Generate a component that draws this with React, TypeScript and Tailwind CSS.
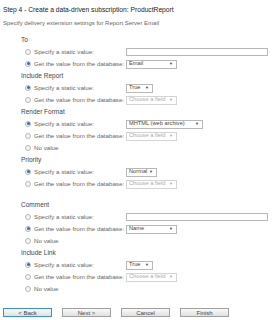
import React from 'react';

type Opt = {
  label: string;
  checked?: boolean;
  control?: 'input' | 'select' | 'disabled';
  value?: string;
  width?: string;
};

type Section = { title: string; options: Opt[]; gapBefore?: boolean };

const sections: Section[] = [
  {
    title: 'To',
    options: [
      { label: 'Specify a static value:', control: 'input' },
      { label: 'Get the value from the database:', checked: true, control: 'select', value: 'Email', width: 'w-[51px]' },
    ],
  },
  {
    title: 'Include Report',
    options: [
      { label: 'Specify a static value:', checked: true, control: 'select', value: 'True', width: 'w-[27px]' },
      { label: 'Get the value from the database:', control: 'disabled' },
    ],
  },
  {
    title: 'Render Format',
    options: [
      { label: 'Specify a static value:', checked: true, control: 'select', value: 'MHTML (web archive)', width: 'w-[77px]' },
      { label: 'Get the value from the database:', control: 'disabled' },
      { label: 'No value' },
    ],
  },
  {
    title: 'Priority',
    options: [
      { label: 'Specify a static value:', checked: true, control: 'select', value: 'Normal', width: 'w-[31px]' },
      { label: 'Get the value from the database:', control: 'disabled' },
    ],
  },
  {
    title: 'Comment',
    gapBefore: true,
    options: [
      { label: 'Specify a static value:', control: 'input' },
      { label: 'Get the value from the database:', checked: true, control: 'select', value: 'Name', width: 'w-[51px]' },
      { label: 'No value' },
    ],
  },
  {
    title: 'Include Link',
    options: [
      { label: 'Specify a static value:', checked: true, control: 'select', value: 'True', width: 'w-[27px]' },
      { label: 'Get the value from the database:', control: 'disabled' },
      { label: 'No value' },
    ],
  },
];

function Radio({ checked }: { checked?: boolean }) {
  return (
    <span className="flex h-[6px] w-[6px] shrink-0 items-center justify-center rounded-full border border-[#b8b8b8] bg-[#f4f4f4]">
      {checked && <span className="h-[3px] w-[3px] rounded-full bg-[#2c6bb8]" />}
    </span>
  );
}

function Select({ value, width, disabled }: { value: string; width: string; disabled?: boolean }) {
  return (
    <div
      className={`flex h-[9px] ${width} items-center justify-between overflow-hidden border bg-white pl-[2px] pr-[3px] text-[5.7px] ${
        disabled ? 'border-[#d4d4d4] text-[#aaa]' : 'border-[#b8b8b8] text-[#444]'
      }`}
    >
      <span className="whitespace-nowrap">{value}</span>
      <span className="text-[4px]">▼</span>
    </div>
  );
}

function OptionRow({ opt }: { opt: Opt }) {
  return (
    <div className="flex h-[12px] items-center">
      <div className="flex w-[126px] shrink-0 items-center gap-[3px] pl-[25px]">
        <Radio checked={opt.checked} />
        <span className="whitespace-nowrap text-[#666]">{opt.label}</span>
      </div>
      {opt.control === 'input' && <div className="h-[8px] w-[142px] border border-[#b8b8b8] bg-white" />}
      {opt.control === 'select' && <Select value={opt.value!} width={opt.width!} />}
      {opt.control === 'disabled' && <Select value="Choose a field" width="w-[51px]" disabled />}
    </div>
  );
}

function Button({ label, focused }: { label: string; focused?: boolean }) {
  return (
    <button
      className={`flex h-[9px] w-[49px] items-center justify-center border bg-gradient-to-b from-[#fafafa] to-[#e0e0e0] text-[6px] text-[#444] ${
        focused ? 'border-[#3c8fd0]' : 'border-[#a0a0a0]'
      }`}
    >
      {label}
    </button>
  );
}

export default function App() {
  return (
    <div className="h-[320px] w-[275px] bg-white text-[6.2px] leading-none" style={{ fontFamily: '"Liberation Sans", Arial, sans-serif' }}>
      <div className="flex h-[20px] items-center pl-[3px] text-[6.7px] text-[#222]">
        Step 4 - Create a data-driven subscription: ProductReport
      </div>
      <div className="flex h-[6px] items-center pl-[3px] text-[6px] text-[#666]">
        Specify delivery extension settings for Report Server Email
      </div>
      <div className="h-[8px]" />

      {sections.map((s) => (
        <div key={s.title} className={s.gapBefore ? 'mt-[9px]' : ''}>
          <div className="flex h-[12px] items-center pl-[21px] text-[6.5px] text-[#444]">{s.title}</div>
          {s.options.map((o, i) => (
            <OptionRow key={i} opt={o} />
          ))}
        </div>
      ))}

      <div className="mt-[13px] flex gap-[10px] pl-[3px]">
        <Button label="< Back" focused />
        <Button label="Next >" />
        <Button label="Cancel" />
        <Button label="Finish" />
      </div>
    </div>
  );
}
